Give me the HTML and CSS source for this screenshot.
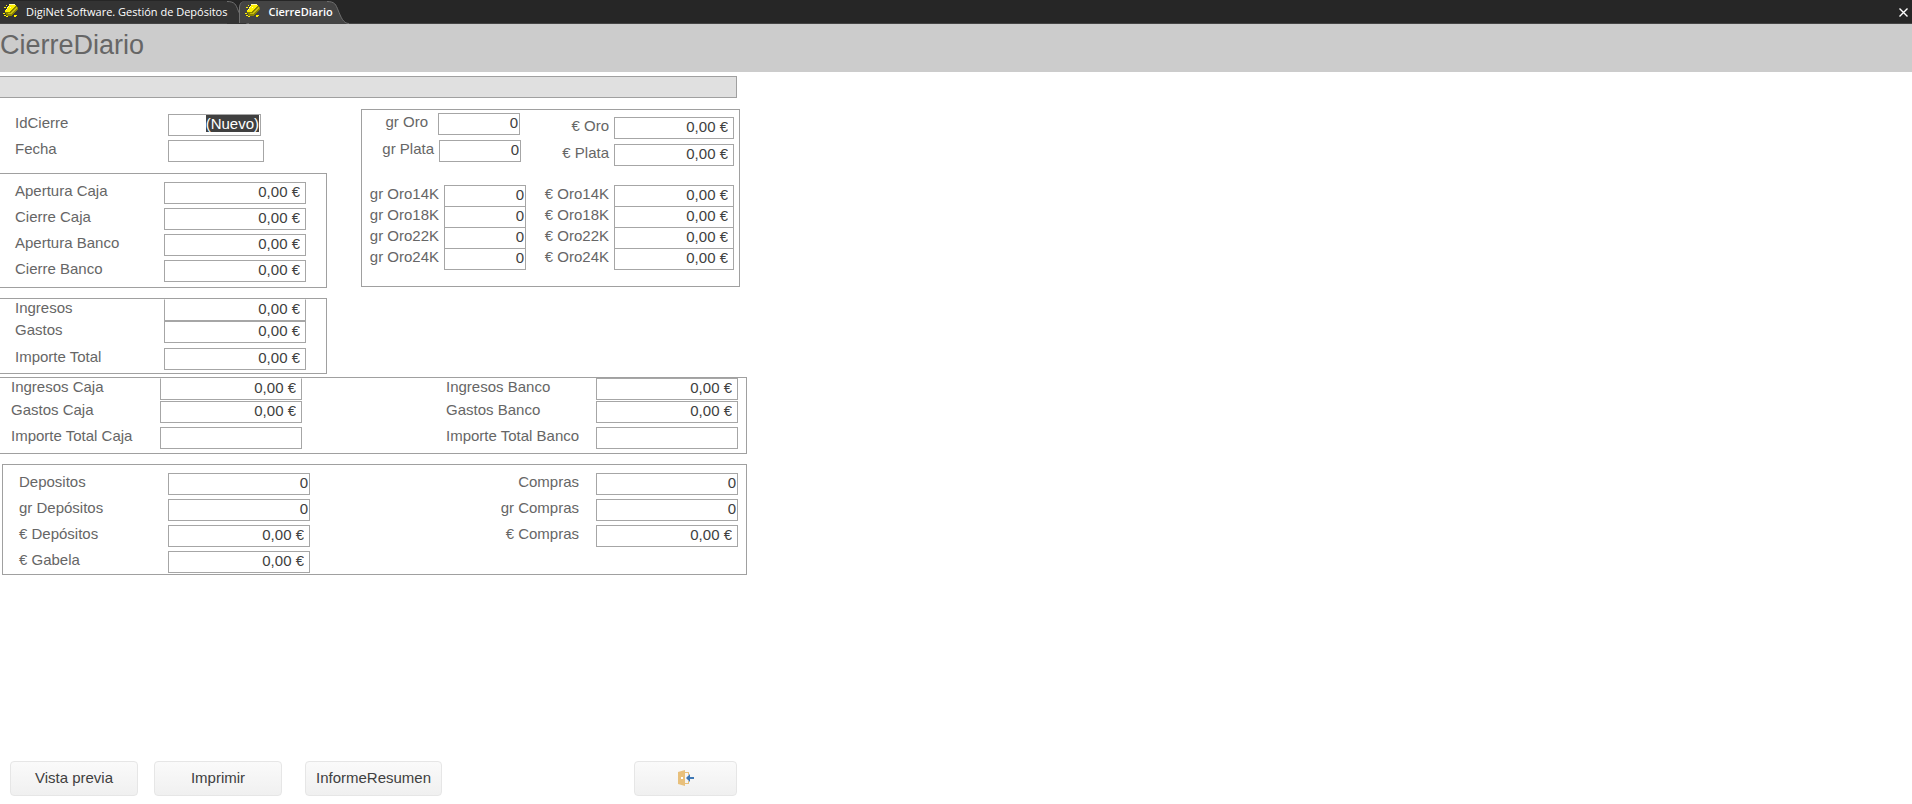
FILE: index.html
```html
<!DOCTYPE html>
<html lang="es">
<head>
<meta charset="utf-8">
<title>CierreDiario</title>
<link rel="stylesheet" href="styles.css">
</head>
<body>
<svg class="sprites" aria-hidden="true">
  <symbol id="gold" viewBox="0 0 16 16">
    <g shape-rendering="crispEdges">
      <path fill="#8a8400" d="M12 2h2v1h1v3h-1v1h-1v1h-1v1h-1v1h-1v1H9v1H4v-1H3V9H2V7h2v1h3V7h1V6h1V5h1V4h1V3h1z"/>
      <path fill="#fff200" d="M6 1h7v1h-1v1h-1v1h-1v1H9v1H8v1H7v1H2V6h1V5h1V4h1V2h1z"/>
      <path fill="#fffbb0" d="M6 0h6v1H6zM5 2h1v1H5zM4 3h1v1H4zM3 5h1v1H3zM7 3h1v1H7z"/>
      <path fill="#c8bf10" d="M13 3h1v2h-1v1h-1v1h-1v1h-1v1H9v1H5V9h3V8h1V7h1V6h1V5h1V4h1z"/>
      <path fill="#fff200" d="M1 3h2v1H1zM0 9h2v1H0zM1 11h2v1h2v1H3v-1H1zM11 11h3v1h-1v1h-2zM3 1h1v1H3z"/>
    </g>
  </symbol>
</svg>
<nav class="tabs">
  <button class="tab" type="button">
    <svg class="tab-icon"><use href="#gold"/></svg>
    <span>DigiNet Software. Gestión de Depósitos</span>
    <svg class="tab-edge" viewBox="0 0 24 23"><path class="tab-fill" d="M0 0.5C8 0.5 9 4 11 9C14 16 16 22.5 22 23H0z"/><path class="tab-line" d="M0 0.5C8 0.5 9 4 11 9C14 16 16 22.5 22 22.5"/></svg>
  </button>
  <button class="tab tab-active" type="button">
    <svg class="tab-icon"><use href="#gold"/></svg>
    <span>CierreDiario</span>
    <svg class="tab-edge" viewBox="0 0 24 23"><path class="tab-fill" d="M0 0.5C8 0.5 9 4 11 9C14 16 16 22.5 22 23H0z"/><path class="tab-line" d="M0 0.5C8 0.5 9 4 11 9C14 16 16 22.5 22 22.5"/></svg>
  </button>
  <button class="close" type="button" aria-label="Cerrar"><svg viewBox="0 0 9 9"><path d="M0.5 0.5l8 8M8.5 0.5l-8 8"/></svg></button>
</nav>
<header class="title"><h1>CierreDiario</h1></header>
<form class="form">
  <div class="strip"></div>
  <div class="upper">
    <div class="left">
      <div class="record">
        <div class="row"><label for="id">IdCierre</label><input id="id" class="id" value="(Nuevo)"></div>
        <div class="row"><label for="fecha">Fecha</label><input id="fecha" class="date"></div>
      </div>
      <section class="box open balances">
        <div class="row"><label for="ac">Apertura Caja</label><input id="ac" class="money" value="0,00 €"></div>
        <div class="row"><label for="cc">Cierre Caja</label><input id="cc" class="money" value="0,00 €"></div>
        <div class="row"><label for="ab">Apertura Banco</label><input id="ab" class="money" value="0,00 €"></div>
        <div class="row"><label for="cb">Cierre Banco</label><input id="cb" class="money" value="0,00 €"></div>
      </section>
      <section class="box open totals">
        <div class="row"><label for="in">Ingresos</label><input id="in" class="money topless" value="0,00 €"></div>
        <div class="row"><label for="ga">Gastos</label><input id="ga" class="money" value="0,00 €"></div>
        <div class="row total"><label for="it">Importe Total</label><input id="it" class="money" value="0,00 €"></div>
      </section>
    </div>
    <section class="box metals">
      <div class="grams">
        <div class="row oro"><label for="go">gr Oro</label><input id="go" value="0"></div>
        <div class="row plata"><label for="gp">gr Plata</label><input id="gp" value="0"></div>
        <div class="karats">
          <div class="row"><label for="g14">gr Oro14K</label><input id="g14" value="0"></div>
          <div class="row"><label for="g18">gr Oro18K</label><input id="g18" value="0"></div>
          <div class="row"><label for="g22">gr Oro22K</label><input id="g22" value="0"></div>
          <div class="row"><label for="g24">gr Oro24K</label><input id="g24" value="0"></div>
        </div>
      </div>
      <div class="euros">
        <div class="row"><label for="eo">€ Oro</label><input id="eo" class="money" value="0,00 €"></div>
        <div class="row"><label for="ep">€ Plata</label><input id="ep" class="money" value="0,00 €"></div>
        <div class="karats">
          <div class="row"><label for="e14">€ Oro14K</label><input id="e14" class="money" value="0,00 €"></div>
          <div class="row"><label for="e18">€ Oro18K</label><input id="e18" class="money" value="0,00 €"></div>
          <div class="row"><label for="e22">€ Oro22K</label><input id="e22" class="money" value="0,00 €"></div>
          <div class="row"><label for="e24">€ Oro24K</label><input id="e24" class="money" value="0,00 €"></div>
        </div>
      </div>
    </section>
  </div>
  <section class="box open flows">
    <div class="side">
      <div class="row"><label for="ic">Ingresos Caja</label><input id="ic" class="money topless" value="0,00 €"></div>
      <div class="row"><label for="gc">Gastos Caja</label><input id="gc" class="money" value="0,00 €"></div>
      <div class="row total"><label for="tc">Importe Total Caja</label><input id="tc" class="money"></div>
    </div>
    <div class="side">
      <div class="row"><label for="ib">Ingresos Banco</label><input id="ib" class="money" value="0,00 €"></div>
      <div class="row"><label for="gb">Gastos Banco</label><input id="gb" class="money" value="0,00 €"></div>
      <div class="row total"><label for="tb">Importe Total Banco</label><input id="tb" class="money"></div>
    </div>
  </section>
  <section class="box deals">
    <div class="side">
      <div class="row"><label for="de">Depositos</label><input id="de" value="0"></div>
      <div class="row"><label for="gd">gr Depósitos</label><input id="gd" value="0"></div>
      <div class="row"><label for="ed">€ Depósitos</label><input id="ed" class="money" value="0,00 €"></div>
      <div class="row"><label for="eg">€ Gabela</label><input id="eg" class="money" value="0,00 €"></div>
    </div>
    <div class="side purchases">
      <div class="row"><label for="co">Compras</label><input id="co" value="0"></div>
      <div class="row"><label for="gco">gr Compras</label><input id="gco" value="0"></div>
      <div class="row"><label for="eco">€ Compras</label><input id="eco" class="money" value="0,00 €"></div>
    </div>
  </section>
  <div class="actions">
    <button class="action" type="button">Vista previa</button>
    <button class="action" type="button">Imprimir</button>
    <button class="action report" type="button">InformeResumen</button>
    <button class="action exit" type="button" aria-label="Salir">
      <svg viewBox="0 0 16 16"><path fill="#e8c07c" d="M0 2L7 0v16L0 14z"/><path fill="#e8c07c" d="M7 2h4v3h-1V3H7zM7 13h3v-2h1v3H7z"/><path fill="#fff" d="M3 7h2v2H3z"/><path fill="#3f78b5" d="M8 8l4-4v3h4v2h-4v3z"/></svg>
    </button>
  </div>
</form>
<script src="form.js"></script>
</body>
</html>
```
FILE: styles.css
```css
* { box-sizing: border-box; }

body {
  margin: 0;
  min-height: 100vh;
  display: flex;
  flex-direction: column;
  background: #fff;
  color: #666;
  font: 15px/18px "Liberation Sans", Arial, sans-serif;
}

.sprites { display: none; }

/* Document tabs */
.tabs {
  display: flex;
  height: 24px;
  padding-top: 1px;
  background: #262626;
  border-bottom: 1px solid #444;
}

.tab {
  --fill: #333;
  display: flex;
  align-items: center;
  height: 22px;
  margin-right: -12px;
  padding: 0 0 0 3px;
  border: 0;
  background: linear-gradient(var(--fill), var(--fill)) left / calc(100% - 24px) 100% no-repeat;
  color: #fff;
  font: 11px/16px "Segoe UI", "Open Sans", sans-serif;
}

.tab-active {
  --fill: #444;
  position: relative;
  padding-left: 5px;
  border-left: 1px solid #707070;
  border-radius: 6px 0 0 0;
  font-weight: 600;
}

.tab-active .tab-edge { margin-left: -6px; }

.tab-icon {
  flex: none;
  width: 16px;
  height: 16px;
  margin-right: 7px;
}

.tab span {
  z-index: 1;
  padding-bottom: 1px;
}

.tab-edge {
  flex: none;
  width: 24px;
  height: 23px;
}

.tab-fill { fill: var(--fill); }
.tab-line { fill: none; stroke: #707070; }

.close {
  width: 13px;
  margin-left: auto;
  padding: 0;
  border: 0;
  background: none;
}

.close svg { display: block; width: 9px; height: 9px; }
.close path { stroke: #fff; stroke-width: 1.4; }

.title { background: #ccc; }

.title h1 {
  margin: 0;
  padding: 1px 0 7px;
  font-size: 27px;
  line-height: 40px;
  font-weight: 400;
}

/* Form */
.form {
  flex: 1;
  display: flex;
  flex-direction: column;
  width: 100%;
  max-width: 747px;
  padding: 4px 0 8px;
}

.strip {
  height: 22px;
  margin-right: 10px;
  border: 1px solid #a0a0a0;
  border-left: 0;
  background: #e0e0e0;
}

.box { border: 1px solid #a0a0a0; }
.open { border-left: 0; }

.row {
  display: flex;
  align-items: flex-start;
  justify-content: space-between;
}

input {
  width: 142px;
  height: 22px;
  margin: 0;
  padding: 0 1px 3px;
  border: 1px solid #a6a6a6;
  border-radius: 0;
  outline: 0;
  background: #fff;
  color: #404040;
  font: inherit;
  text-align: right;
}

input::selection { background: #404040; color: #fff; }

.money { padding-right: 5px; }
.topless { border-top-color: transparent; }

.upper {
  display: grid;
  grid-template-columns: 327px 379px;
  gap: 34px;
  align-items: start;
}

.record {
  display: grid;
  gap: 4px;
  padding: 16px 0 11px 15px;
}

.record .row { display: grid; grid-template-columns: 153px auto; justify-content: start; }
.id { width: 93px; }
.date { width: 96px; }

.balances {
  display: grid;
  gap: 4px;
  padding: 8px 20px 5px 15px;
}

.totals {
  margin-top: 10px;
  padding: 0 20px 3px 15px;
}

.totals .total { margin-top: 5px; }

.metals {
  display: flex;
  justify-content: space-between;
  margin-top: 11px;
  padding: 3px 5px 16px 0;
}

.grams, .euros { display: grid; row-gap: 5px; }
.grams .row { justify-content: flex-start; }
.grams label { width: 77px; text-align: right; }
.grams input { width: 82px; margin-left: 5px; }
.grams .oro label { width: 66px; }
.grams .oro input { margin-left: 10px; }
.grams .plata label { width: 72px; }
.euros { align-content: start; padding-top: 4px; }
.euros .row { justify-content: flex-end; gap: 5px; }
.euros input { width: 120px; }

.karats { margin-top: 18px; }
.euros .karats { margin-top: 14px; }
.karats .row + .row { margin-top: -1px; }

.flows, .deals {
  display: flex;
  justify-content: space-between;
  align-items: flex-start;
}

.flows {
  margin-top: 3px;
  padding: 0 8px 4px 11px;
}

.flows .side {
  display: grid;
  row-gap: 1px;
  width: 291px;
}

.flows .side + .side { width: 292px; }
.flows .total { margin-top: 3px; }

.deals {
  margin: 10px 0 0 2px;
  padding: 8px 8px 1px 16px;
}

.deals .side {
  display: grid;
  row-gap: 4px;
  width: 291px;
}

.purchases .row { justify-content: flex-end; gap: 17px; }

.actions {
  display: flex;
  margin-top: auto;
  padding: 0 10px;
  gap: 16px;
}

.action {
  width: 128px;
  height: 35px;
  padding: 0 0 1px;
  border: 1px solid #e6e6e6;
  border-radius: 4px;
  background: linear-gradient(#fafafa, #f0f0f0);
  color: #404040;
  font: inherit;
}

.report { width: 137px; margin-left: 7px; }
.exit { width: 103px; margin-left: auto; }
.exit svg { display: block; width: 16px; height: 16px; margin: 0 auto; }
```
FILE: form.js
```js
const idField = document.getElementById('id');
idField.focus();
idField.select();
```
